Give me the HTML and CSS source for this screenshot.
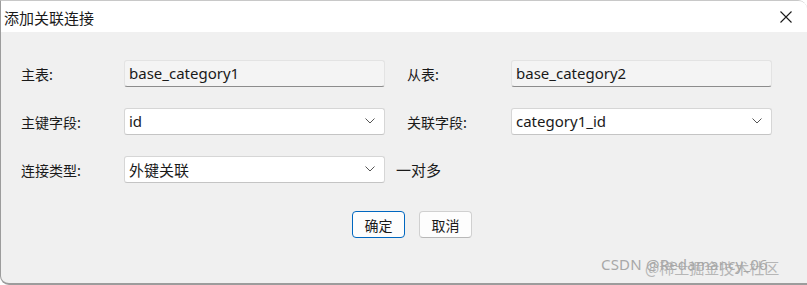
FILE: index.html
```html
<!DOCTYPE html>
<html lang="zh-CN">

<head>
    <meta charset="UTF-8">
    <meta name="viewport" content="width=device-width, initial-scale=1.0">
    <title>添加关联连接</title>
    <link rel="stylesheet" href="styles.css">
</head>

<body>
    <div class="dialog">
        <!-- title bar -->
        <div class="titlebar">
            <span class="title">添加关联连接</span>
            <svg class="close" width="12" height="12" viewBox="0 0 12 12">
                <path d="M0.5 0.5 L11.5 11.5 M11.5 0.5 L0.5 11.5" stroke="#1a1a1a" stroke-width="1.1" fill="none" />
            </svg>
        </div>

        <div class="content">
            <div class="form">
                <label class="lbl">主表:</label>
                <div class="field readonly">base_category1</div>
                <span></span>
                <label class="lbl">从表:</label>
                <div class="field readonly">base_category2</div>

                <label class="lbl">主键字段:</label>
                <div class="field combo">id
                    <svg class="chev" width="10" height="6" viewBox="0 0 10 6"><path d="M0.5 0.5 L5 5 L9.5 0.5" stroke="#555" stroke-width="1" fill="none" /></svg>
                </div>
                <span></span>
                <label class="lbl">关联字段:</label>
                <div class="field combo">category1_id
                    <svg class="chev" width="10" height="6" viewBox="0 0 10 6"><path d="M0.5 0.5 L5 5 L9.5 0.5" stroke="#555" stroke-width="1" fill="none" /></svg>
                </div>

                <label class="lbl">连接类型:</label>
                <div class="field combo cjk">外键关联
                    <svg class="chev" width="10" height="6" viewBox="0 0 10 6"><path d="M0.5 0.5 L5 5 L9.5 0.5" stroke="#555" stroke-width="1" fill="none" /></svg>
                </div>
                <span class="rel">一对多</span>
            </div>

            <div class="buttons">
                <button class="btn primary">确定</button>
                <button class="btn">取消</button>
            </div>
        </div>

        <div class="watermark">
            <span class="wm1">CSDN @Redamancy_06</span>
            <span class="wm2">@稀土掘金技术社区</span>
        </div>
    </div>
</body>

</html>
```

FILE: styles.css
```css
* {
    margin: 0;
    padding: 0;
    box-sizing: border-box;
}

html,
body {
    height: 100%;
}

body {
    font-family: "Segoe UI", "Noto Sans", "Noto Sans CJK SC", sans-serif;
    color: #1a1a1a;
    background: #ffffff;
}

.dialog {
    width: 807px;
    height: 285px;
    position: relative;
    overflow: hidden;
    background: #f0f0f0;
    border-left: 1px solid #9c9c9c;
    border-top: 1px solid #c8c8c8;
    border-bottom: 2px solid #9c9c9c;
    border-radius: 0 9px 0 9px;
}

.titlebar {
    height: 31px;
    background: #ffffff;
    display: flex;
    align-items: center;
    justify-content: space-between;
    padding: 0 15px 0 3px;
}

.title {
    font-family: "Noto Sans CJK SC", sans-serif;
    font-size: 15px;
    margin-top: 2px;
}

.close {
    margin-top: 1px;
}

.content {
    padding: 28px 0 0 20px;
}

.form {
    display: grid;
    grid-template-columns: 103px 261px 22px 104px 261px;
    grid-template-rows: 27px 27px 27px;
    row-gap: 21px;
    align-items: center;
}

.lbl {
    font-family: "Noto Sans CJK SC", sans-serif;
    font-size: 14px;
    color: #1a1a1a;
}

.field {
    height: 27px;
    display: flex;
    align-items: center;
    justify-content: space-between;
    padding: 0 9px 1px 4px;
    font-size: 15px;
    border-radius: 3px;
}

.readonly {
    background: #f4f4f4;
    border: 1px solid #e3e3e3;
    border-bottom: 1px solid #8c8c8c;
}

.combo {
    background: #ffffff;
    border: 1px solid #d6d6d6;
    border-bottom-color: #c4c4c4;
}

.cjk {
    font-family: "Noto Sans CJK SC", sans-serif;
}

.chev {
    flex: none;
}

.rel {
    grid-column: 3 / 5;
    margin-left: 11px;
    font-family: "Noto Sans CJK SC", sans-serif;
    font-size: 15px;
}

.buttons {
    display: flex;
    justify-content: center;
    gap: 14px;
    padding-right: 4px;
    margin-top: 28px;
}

.btn {
    width: 53px;
    height: 27px;
    font-family: "Noto Sans CJK SC", sans-serif;
    font-size: 14px;
    color: #1a1a1a;
    background: #fdfdfd;
    border: 1px solid #d0d0d0;
    border-bottom-color: #b8b8b8;
    border-radius: 4px;
}

.btn.primary {
    border: 1px solid #0067c0;
}

/* site watermark over the corner */
.watermark {
    position: absolute;
    right: 10px;
    bottom: 7px;
    width: 200px;
    height: 22px;
    color: #a8a8a8;
    font-family: "Noto Sans", "Noto Sans CJK SC", sans-serif;
    font-size: 15px;
}

.wm1 {
    position: absolute;
    left: 4px;
    top: 0;
    letter-spacing: 0.2px;
}

.wm2 {
    position: absolute;
    left: 48px;
    top: 3px;
    font-family: "Noto Sans CJK SC", sans-serif;
    opacity: 0.8;
}
```
